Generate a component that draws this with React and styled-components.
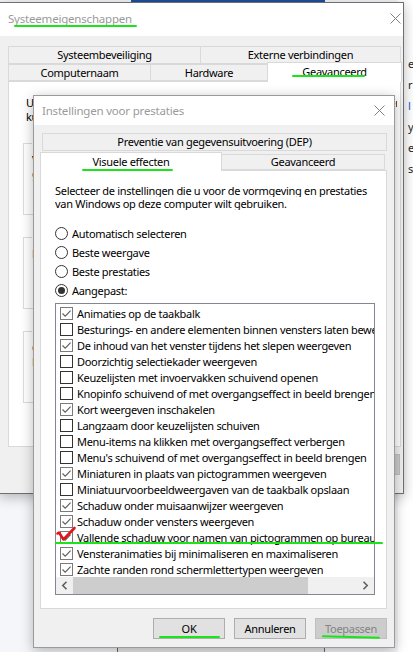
import React from "react"
import styled, { createGlobalStyle, css } from "styled-components"

const GlobalStyle = createGlobalStyle`
  html, body {
    margin: 0;
    padding: 0;
    background: #f4f6f9;
  }
  body {
    font-family: "Noto Sans", "Segoe UI", sans-serif;
    font-size: 11px;
    color: #000;
  }
`

const UI_FONT = `"Noto Sans", "Segoe UI", sans-serif`

// the dialog font, kept a bit tight so lines wrap like the system font
const uiText = css`
  font-family: ${UI_FONT};
  font-size: 11px;
  letter-spacing: -0.3px;
`

// desktop and what peeks out behind the dialogs

const Desktop = styled.div`
  position: relative;
  width: 413px;
  height: 652px;
  overflow: hidden;
  background: #f4f6f9;
`

const TaskStrip = styled.div`
  position: absolute;
  left: 131px;
  top: 0;
  width: 194px;
  height: 3px;
  background: #1d4f9e;
`

const BackPane = styled.div`
  position: absolute;
  left: 398px;
  top: 0;
  width: 15px;
  height: 652px;
  background: #fff;
  display: flex;
  flex-direction: column;
  padding: 58px 0 0 10px;
  box-sizing: border-box;
  gap: 9px;
  ${uiText};
  line-height: 12px;
`

const BackChar = styled.span`
  color: ${(p) => (p.$link ? "#1a55c8" : "#222")};
`

const BackFrame = styled.div`
  position: absolute;
  left: 117px;
  top: 630px;
  width: 208px;
  height: 30px;
  box-sizing: border-box;
  border-left: 1px solid #6a6a6a;
  border-right: 1px solid #6a6a6a;
  background: #e9eaec;
`

// window chrome

const Window = styled.div`
  position: absolute;
  left: ${(p) => p.$x}px;
  top: ${(p) => p.$y}px;
  width: ${(p) => p.$w}px;
  height: ${(p) => p.$h}px;
  box-sizing: border-box;
  border: 1px solid ${(p) => p.$edge};
  background: #f0f0f0;
  box-shadow: 0 3px 12px rgba(0, 0, 0, 0.28);
  display: flex;
  flex-direction: column;
  ${uiText};
`

const TitleBar = styled.div`
  height: ${(p) => p.$h}px;
  flex: none;
  background: #fff;
  display: flex;
  align-items: center;
  justify-content: space-between;
  padding: 0 ${(p) => p.$padR}px ${(p) => p.$lift}px 8px;
`

const Title = styled.span`
  font-family: ${UI_FONT};
  font-size: 11.5px;
  letter-spacing: -0.2px;
  color: #9a9a9a;
`

const CloseGlyph = () => (
  <svg width="11" height="11" viewBox="0 0 11 11">
    <path d="M0.5 0.5 L10.5 10.5 M10.5 0.5 L0.5 10.5" stroke="#808080" strokeWidth="1" fill="none" />
  </svg>
)

const Body = styled.div`
  flex: 1;
  display: flex;
  flex-direction: column;
  padding: ${(p) => p.$pad};
`

// tab control

const TabRow = styled.div`
  display: flex;
  align-items: flex-end;
  height: ${(p) => p.$h}px;
  margin-left: ${(p) => p.$indent || 0}px;
`

const Tab = styled.div`
  position: relative;
  box-sizing: border-box;
  width: ${(p) => p.$w}px;
  height: ${(p) => p.$h}px;
  margin-right: -1px;
  margin-bottom: ${(p) => (p.$active ? -1 : 0)}px;
  border: 1px solid #d9d9d9;
  border-bottom: ${(p) => (p.$active ? "none" : "1px solid #d9d9d9")};
  background: ${(p) => (p.$active ? "#fff" : "#f0f0f0")};
  z-index: ${(p) => (p.$active ? 2 : 1)};
  display: flex;
  align-items: center;
  justify-content: center;
  line-height: 1;
  padding-bottom: ${(p) => (p.$active ? 2 : 1)}px;
`

const TabPanel = styled.div`
  box-sizing: border-box;
  width: ${(p) => p.$w}px;
  height: ${(p) => p.$h}px;
  flex: none;
  background: #fff;
  border: 1px solid #d9d9d9;
  padding: ${(p) => p.$pad};
  display: flex;
  flex-direction: column;
`

const Para = styled.p`
  margin: 0;
  padding-left: ${(p) => p.$indent || 0}px;
  max-width: ${(p) => (p.$max ? `${p.$max}px` : "none")};
  overflow: hidden;
  line-height: ${(p) => p.$lh || 13}px;
  white-space: nowrap;
`

// outer dialog groups

const Group = styled.fieldset`
  box-sizing: border-box;
  height: 79px;
  width: 362px;
  margin: ${(p) => p.$top}px 0 0;
  padding: 3px 8px 0;
  border: 1px solid #dcdcdc;
  line-height: 14px;
  white-space: nowrap;
`

const Legend = styled.legend`
  padding: 0 2px;
  margin-left: 0;
`

// inner dialog form parts

const RadioList = styled.div`
  display: flex;
  flex-direction: column;
  margin-top: 14px;
`

const RadioRow = styled.label`
  height: 19px;
  display: flex;
  align-items: center;
  gap: 4px;
`

const RadioDot = styled.span`
  box-sizing: border-box;
  width: 13px;
  height: 13px;
  border-radius: 50%;
  border: 1px solid #333;
  background: #fff;
  display: flex;
  align-items: center;
  justify-content: center;
  flex: none;

  &::after {
    content: "";
    width: 7px;
    height: 7px;
    border-radius: 50%;
    background: ${(p) => (p.$on ? "#333" : "transparent")};
  }
`

const ListBox = styled.div`
  position: relative;
  box-sizing: border-box;
  width: 320px;
  height: 292px;
  margin-top: 3px;
  border: 1px solid #828790;
  background: #fff;
  display: flex;
  flex-direction: column;
`

const ListItems = styled.div`
  flex: 1;
  overflow: hidden;
  padding: 1px 0 0 4px;
`

const ListRow = styled.div`
  height: 16px;
  display: flex;
  align-items: center;
  gap: 4px;
  white-space: nowrap;
`

const Box = styled.span`
  box-sizing: border-box;
  width: 13px;
  height: 13px;
  flex: none;
  border: 1px solid ${(p) => (p.$on ? "#7a7a7a" : "#333")};
  background: #fff;
  display: flex;
  align-items: center;
  justify-content: center;
`

const Tick = () => (
  <svg width="11" height="11" viewBox="0 0 11 11">
    <path d="M1.5 5.5 L4.2 8.2 L9.6 2.6" stroke="#5a5a5a" strokeWidth="1.1" fill="none" />
  </svg>
)

const HScroll = styled.div`
  height: 17px;
  flex: none;
  display: flex;
  background: #f0f0f0;
`

const ScrollArrow = styled.div`
  width: 17px;
  flex: none;
  display: flex;
  align-items: center;
  justify-content: center;
`

const ScrollTrack = styled.div`
  flex: 1;
  display: flex;
  align-items: stretch;
`

const ScrollThumb = styled.div`
  width: 235px;
  background: #cdcdcd;
`

const Chevron = ({ dir }) => (
  <svg width="7" height="9" viewBox="0 0 7 9">
    <path
      d={dir === "left" ? "M5.5 0.8 L1.8 4.5 L5.5 8.2" : "M1.5 0.8 L5.2 4.5 L1.5 8.2"}
      stroke="#606060"
      strokeWidth="1.6"
      fill="none"
    />
  </svg>
)

const ButtonRow = styled.div`
  display: flex;
  justify-content: flex-end;
  gap: 9px;
  margin-top: ${(p) => p.$top}px;
  padding-right: ${(p) => p.$inset || 0}px;
`

const Button = styled.button`
  box-sizing: border-box;
  width: 72px;
  height: 21px;
  padding: 0;
  border: 1px solid ${(p) => (p.disabled ? "#bfbfbf" : "#adadad")};
  background: ${(p) => (p.disabled ? "#cccccc" : "#e1e1e1")};
  color: ${(p) => (p.disabled ? "#838383" : "#000")};
  ${uiText};
`

// pen marks drawn over the screenshot

const Mark = styled.div`
  position: absolute;
  left: ${(p) => p.$x}px;
  top: ${(p) => p.$y}px;
  width: ${(p) => p.$w}px;
  height: 2px;
  border-radius: 1px;
  background: #1be41b;
  transform: rotate(${(p) => p.$tilt || 0}deg);
  z-index: 10;
`

const RedTick = styled.svg`
  position: absolute;
  left: 55px;
  top: 525px;
  z-index: 10;
`

const effects = [
  ["Animaties op de taakbalk", true],
  ["Besturings- en andere elementen binnen vensters laten bewegen", false],
  ["De inhoud van het venster tijdens het slepen weergeven", true],
  ["Doorzichtig selectiekader weergeven", false],
  ["Keuzelijsten met invoervakken schuivend openen", false],
  ["Knopinfo schuivend of met overgangseffect in beeld brengen", false],
  ["Kort weergeven inschakelen", true],
  ["Langzaam door keuzelijsten schuiven", false],
  ["Menu-items na klikken met overgangseffect verbergen", false],
  ["Menu's schuivend of met overgangseffect in beeld brengen", false],
  ["Miniaturen in plaats van pictogrammen weergeven", true],
  ["Miniatuurvoorbeeldweergaven van de taakbalk opslaan", false],
  ["Schaduw onder muisaanwijzer weergeven", true],
  ["Schaduw onder vensters weergeven", true],
  ["Vallende schaduw voor namen van pictogrammen op bureaublad", true],
  ["Vensteranimaties bij minimaliseren en maximaliseren", true],
  ["Zachte randen rond schermlettertypen weergeven", true],
]

const modes = [
  ["Automatisch selecteren", false],
  ["Beste weergave", false],
  ["Beste prestaties", false],
  ["Aangepast:", true],
]

const SystemProperties = () => (
  <Window $x={-1} $y={2} $w={405} $h={492} $edge="#6f6f6f">
    <TitleBar $h={30} $padR={2} $lift={3}>
      <Title>Systeemeigenschappen</Title>
      <CloseGlyph />
    </TitleBar>
    <Body $pad="10px 0 0 8px">
      <TabRow $h={18}>
        <Tab $w={193} $h={18}>Systeembeveiliging</Tab>
        <Tab $w={201} $h={18}>Externe verbindingen</Tab>
      </TabRow>
      <TabRow $h={17}>
        <Tab $w={143} $h={17}>Computernaam</Tab>
        <Tab $w={118} $h={17}>Hardware</Tab>
        <Tab $w={135} $h={20} $active>Geavanceerd</Tab>
      </TabRow>
      <TabPanel $w={393} $h={366} $pad="14px 0 0 14px">
        <Para $indent={3} $lh={14} $max={371}>
          U moet als Administrator zijn aangemeld om de meeste van deze wijzigingen te
        </Para>
        <Para $indent={3} $lh={14}>kunnen aanbrengen.</Para>
        <Group $top={12}>
          <Legend>Prestaties</Legend>
          Visuele effecten, processorplanning, geheugengebruik en virtueel
          <br />
          geheugen
        </Group>
        <Group $top={15}>
          <Legend>Gebruikersprofielen</Legend>
          Bureaubladinstellingen die betrekking hebben op uw aanmelding
        </Group>
        <Group $top={15}>
          <Legend>Opstarten en herstel</Legend>
          Computer opstarten, systeemfouten en
          <br />
          Foutopsporingsgegevens
        </Group>
      </TabPanel>
      <ButtonRow $top={7} $inset={3}>
        <Button>OK</Button>
        <Button>Annuleren</Button>
        <Button disabled>Toepassen</Button>
      </ButtonRow>
    </Body>
  </Window>
)

const PerformanceOptions = () => (
  <Window $x={33} $y={95} $w={362} $h={553} $edge="#9a9a9a">
    <TitleBar $h={29} $padR={9} $lift={0}>
      <Title>Instellingen voor prestaties</Title>
      <CloseGlyph />
    </TitleBar>
    <Body $pad="8px 7px 0 6px">
      <TabRow $h={18} $indent={2}>
        <Tab $w={345} $h={18}>Preventie van gegevensuitvoering (DEP)</Tab>
      </TabRow>
      <TabRow $h={19}>
        <Tab $w={182} $h={19} $active>Visuele effecten</Tab>
        <Tab $w={164} $h={16}>Geavanceerd</Tab>
      </TabRow>
      <TabPanel $w={347} $h={439} $pad="13px 0 0 14px">
        <Para>Selecteer de instellingen die u voor de vormgeving en prestaties</Para>
        <Para>van Windows op deze computer wilt gebruiken.</Para>
        <RadioList>
          {modes.map(([label, on]) => (
            <RadioRow key={label}>
              <RadioDot $on={on} />
              {label}
            </RadioRow>
          ))}
        </RadioList>
        <ListBox>
          <ListItems>
            {effects.map(([label, on]) => (
              <ListRow key={label}>
                <Box $on={on}>{on && <Tick />}</Box>
                {label}
              </ListRow>
            ))}
          </ListItems>
          <HScroll>
            <ScrollArrow>
              <Chevron dir="left" />
            </ScrollArrow>
            <ScrollTrack>
              <ScrollThumb />
            </ScrollTrack>
            <ScrollArrow>
              <Chevron dir="right" />
            </ScrollArrow>
          </HScroll>
        </ListBox>
      </TabPanel>
      <ButtonRow $top={9}>
        <Button>OK</Button>
        <Button>Annuleren</Button>
        <Button disabled>Toepassen</Button>
      </ButtonRow>
    </Body>
  </Window>
)

export default function App() {
  return (
    <>
      <GlobalStyle />
      <Desktop>
        <TaskStrip />
        <BackFrame />
        <BackPane>
          <BackChar>e</BackChar>
          <BackChar>r</BackChar>
          <BackChar $link>l</BackChar>
          <BackChar>y</BackChar>
          <BackChar>e</BackChar>
          <BackChar>s</BackChar>
        </BackPane>
        <SystemProperties />
        <PerformanceOptions />

        <Mark $x={14} $y={25} $w={123} />
        <Mark $x={292} $y={75} $w={73} />
        <Mark $x={82} $y={169} $w={91} />
        <Mark $x={55} $y={542} $w={328} />
        <Mark $x={159} $y={636} $w={61} />
        <Mark $x={322} $y={636} $w={58} $tilt={1.5} />
        <RedTick width="22" height="18" viewBox="0 0 22 18">
          <path
            d="M2.5 8.5 L4 7.5 L8.5 14.5 L19.5 3"
            stroke="#e3141c"
            strokeWidth="2.6"
            strokeLinecap="round"
            strokeLinejoin="round"
            fill="none"
          />
        </RedTick>
      </Desktop>
    </>
  )
}
